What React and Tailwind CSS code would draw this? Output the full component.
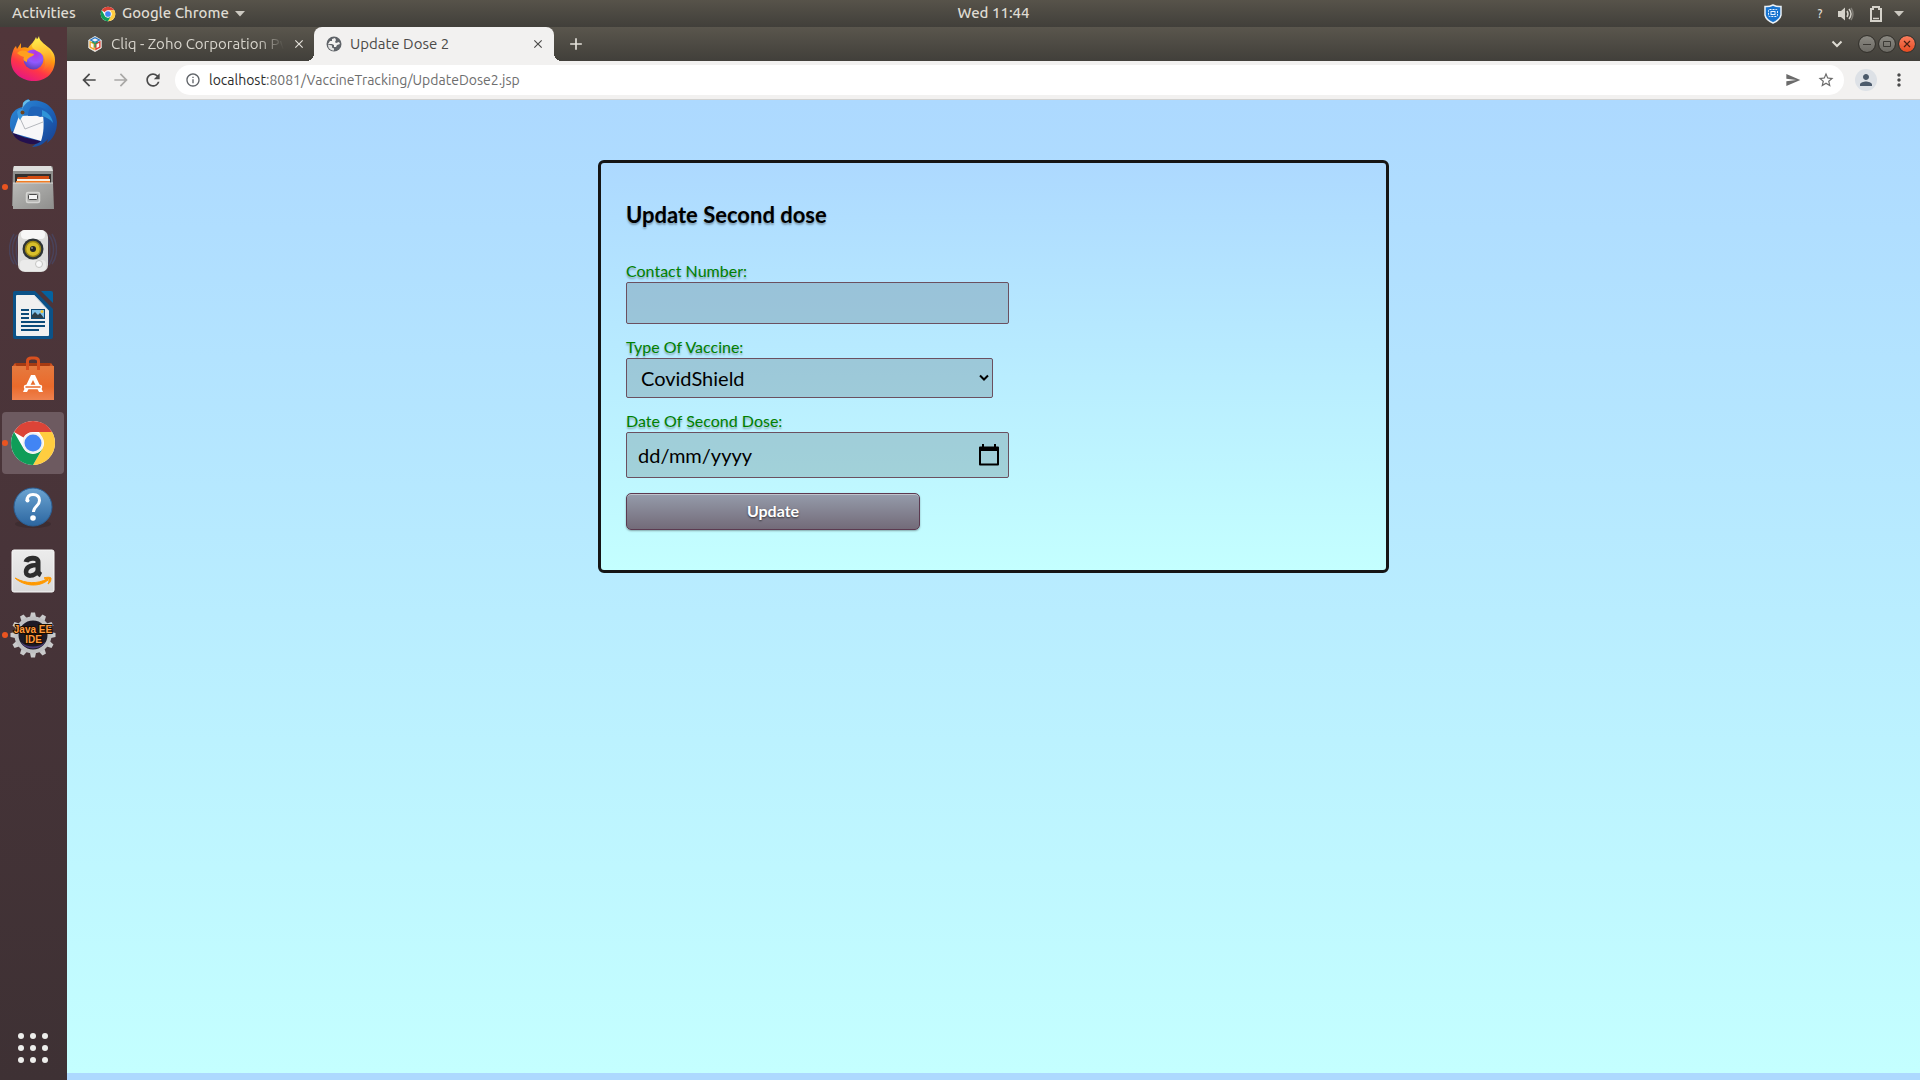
import { useState } from "react";
import {
  MdArrowBack,
  MdArrowForward,
  MdRefresh,
  MdInfoOutline,
  MdSend,
  MdStarBorder,
  MdPerson,
  MdMoreVert,
  MdClose,
  MdAdd,
} from "react-icons/md";

const UI = "font-['Ubuntu','Noto_Sans',sans-serif]";

function ChromeLogo({ className }) {
  return (
    <svg viewBox="0 0 48 48" className={className} aria-hidden="true">
      <circle cx="24" cy="24" r="22" fill="#fff" />
      <path d="M24 2a22 22 0 0 1 19.05 11H24a11 11 0 0 0-9.5 5.5L5 13A22 22 0 0 1 24 2z" fill="#db4437" />
      <path d="M43.05 13A22 22 0 0 1 24 46l9.5-16.5A11 11 0 0 0 33.500 18.500L30 13z" fill="#ffcd40" />
      <path d="M5 13l9.500 16.500A11 11 0 0 0 33.500 29.500L24 46A22 22 0 0 1 5 13z" fill="#0f9d58" />
      <circle cx="24" cy="24" r="10.500" fill="#f1f1f1" />
      <circle cx="24" cy="24" r="8.500" fill="#4285f4" />
    </svg>
  );
}

function Firefox() {
  return (
    <svg viewBox="0 0 48 48" className="size-12" aria-hidden="true">
      <defs>
        <linearGradient id="ffBody" x1="0.8" y1="0" x2="0.3" y2="1">
          <stop offset="0.1" stopColor="#fff44f" />
          <stop offset="0.4" stopColor="#ff980e" />
          <stop offset="0.7" stopColor="#ff3647" />
          <stop offset="1" stopColor="#e31587" />
        </linearGradient>
        <radialGradient id="ffGlobe" cx="0.6" cy="0.2" r="0.9">
          <stop offset="0" stopColor="#b833e1" />
          <stop offset="0.5" stopColor="#9059ff" />
          <stop offset="1" stopColor="#4f3aa6" />
        </radialGradient>
        <linearGradient id="ffTail" x1="0.5" y1="0" x2="0.6" y2="1">
          <stop offset="0" stopColor="#fff44f" />
          <stop offset="0.5" stopColor="#ffbd2f" />
          <stop offset="1" stopColor="#ff6a2a" stopOpacity="0.2" />
        </linearGradient>
      </defs>
      <path d="M4 16c1-3 2-4 3-5l1 3 4-6v5c2-1 5-1 7 0 3-4 6-6 8-11 1 4 4 7 8 9l-1-2c8 4 12 9 12 16 0 13-9 21-21 21S2 38 2 26c0-4 1-7 2-10z" fill="url(#ffBody)" />
      <circle cx="24.500" cy="24.500" r="10" fill="url(#ffGlobe)" />
      <path d="M30 1c0 6 8 8 11 15 4 9-1 18-8 20 4-4 4-11 1-16-3-4-12-5-11-10 1-4 6-5 7-9z" fill="url(#ffTail)" />
      <path d="M8 18c3-3 6-3 9-2 2 2 5 2 8 3 0 2-3 2-5 4-2 1-2 2-2 4-4-1-4-3-3-5-3-1-5-2-7-4z" fill="#ffa01e" />
    </svg>
  );
}

function Thunderbird() {
  return (
    <svg viewBox="0 0 48 48" className="size-12" aria-hidden="true">
      <defs>
        <linearGradient id="tbBody" x1="0" y1="0" x2="1" y2="1">
          <stop offset="0" stopColor="#2f8bd8" />
          <stop offset="0.5" stopColor="#1d67bd" />
          <stop offset="1" stopColor="#173c8c" />
        </linearGradient>
      </defs>
      <path d="M14 4C17 0 21-1 20 2c15-3 27 7 28 21 0 10-4 17-10 21l1-4c-4 5-10 8-16 8l5-4C13 44 0 37 1 24 1 14 7 9 14 8z" fill="url(#tbBody)" />
      <path d="M14 4c3-4 7-4 7-2-5 2-7 6-8 9z" fill="#66bde9" />
      <path d="M3 32c5 5 18 8 29 10-5 5-13 3-18 1C8 41 4 37 3 32z" fill="#23104f" />
      <path d="M10 17l24-1c1 9 1 17-2 26L4 34z" fill="#f7f7f8" />
      <path d="M10 17l6 13 18-7" fill="none" stroke="#b5b8bd" strokeWidth="1" />
      <path d="M8 13c3-5 8-3 7 2l-4 6-2-3z" fill="#3a96dc" />
      <circle cx="13.500" cy="13.500" r="2" fill="#6b4420" />
      <path d="M22 8c9-2 19 3 22 14-5-4-9-5-13-4-3-2-7-1-12-1 0-4 1-7 3-9z" fill="#1f63b8" />
      <path d="M33 11c6 2 10 7 11 13-3-4-7-6-11-7z" fill="#2f94d8" />
    </svg>
  );
}

function Files() {
  return (
    <svg viewBox="0 0 48 48" className="size-12" aria-hidden="true">
      <defs>
        <linearGradient id="flFront" x1="0" y1="0" x2="1" y2="1">
          <stop offset="0" stopColor="#b9b9b7" />
          <stop offset="1" stopColor="#8e8e8c" />
        </linearGradient>
      </defs>
      <path d="M4 5q0-2 2-2h36q2 0 2 2v38H3z" fill="#8f8f8d" />
      <path d="M5 3h37l2 5H4z" fill="#dededc" />
      <path d="M6 11h36v10H6z" fill="#33302f" />
      <path d="M9 14h9l1-1h21v8H8v-6z" fill="#d34c12" />
      <path d="M8 16h33v5H8z" fill="#f6f0e6" />
      <path d="M7 18h34v3H7z" fill="#f27d24" />
      <path d="M4 20h40l1 26H4z" fill="url(#flFront)" />
      <path d="M4 20h40" stroke="#d7d7d5" />
      <rect x="17.500" y="29.500" width="13" height="10" rx="1.500" fill="#b5b5b3" stroke="#d5d5d3" strokeWidth="1.500" />
      <rect x="19.500" y="31.500" width="9" height="5" rx="1" fill="#f4f4f4" stroke="#4a4a4a" />
    </svg>
  );
}

function Rhythmbox() {
  return (
    <svg viewBox="0 0 48 48" className="size-12" aria-hidden="true">
      <g fill="none" stroke="#46507a" strokeWidth="1.500" opacity="0.5">
        <path d="M8 8C2 16 2 28 8 38M5 7C-1 17-1 29 5 37M11 8C6 16 6 30 11 40" />
        <path d="M40 8c6 8 6 20 0 30M43 7c6 10 6 22 0 30M37 8c5 8 5 22 0 32" />
      </g>
      <rect x="9" y="3" width="30" height="42" rx="7" fill="#dcdcda" />
      <rect x="12" y="3" width="24" height="9" rx="4" fill="#f7f7f7" />
      <rect x="11" y="33" width="26" height="11" rx="4" fill="#ebebea" />
      <circle cx="24" cy="22" r="10.500" fill="#2e3436" />
      <circle cx="24" cy="22" r="7.500" fill="#d8bf2a" stroke="#9c8614" strokeWidth="1.500" />
      <circle cx="24" cy="22" r="3" fill="#242626" />
      <circle cx="23" cy="21" r="1" fill="#8a8a8a" />
      <circle cx="30" cy="37" r="3.500" fill="#f8f8f8" stroke="#c4c4c2" />
    </svg>
  );
}

function Writer() {
  return (
    <svg viewBox="0 0 48 48" className="size-12" aria-hidden="true">
      <path d="M6 0h20l18 18v28q0 2-2 2H6q-2 0-2-2V2q0-2 2-2z" fill="#0b5288" />
      <path d="M32 0h10q2 0 2 2v10z" fill="#04629f" />
      <path d="M9 4h16l15 16v24q0 1-1 1H8q-1 0-1-1V5q0-1 1-1z" fill="#f0f0f0" />
      <path d="M25 4l15 16" stroke="#c7d2d9" />
      <path d="M12 19h8M12 23h8M12 27h8M12 31h24M12 35h24M12 39h18" stroke="#0b4a78" strokeWidth="2" />
      <rect x="22.500" y="18.500" width="13" height="9" fill="#7fc1e9" stroke="#0b4a78" />
      <path d="M23 27v-3l3-3 3 3 2-2 4 5z" fill="#2c3e48" />
      <circle cx="33" cy="20.500" r="1.500" fill="#f4c52d" />
    </svg>
  );
}

function Software() {
  return (
    <svg viewBox="0 0 48 48" className="size-12" aria-hidden="true">
      <defs>
        <linearGradient id="swBag" x1="0" y1="0" x2="0" y2="1">
          <stop offset="0" stopColor="#e57a3f" />
          <stop offset="0.6" stopColor="#ea6a2b" />
          <stop offset="1" stopColor="#ee8250" />
        </linearGradient>
      </defs>
      <path d="M6 8h36v8H6z" fill="#a53a12" />
      <path d="M3 12l3-4 2 4zM45 12l-3-4-2 4z" fill="#cf5524" />
      <path d="M3 11h42v34H3z" fill="url(#swBag)" />
      <path d="M18.500 15V6q0-3 4-3h3q4 0 4 3v9" fill="none" stroke="#d8501f" strokeWidth="3" />
      <path d="M22 20h4l8 17h-4l-6-12-6 12h-4z" fill="#fff" />
      <rect x="15.500" y="30.500" width="17" height="3" rx="1.500" fill="#ea6a2b" stroke="#fff" strokeWidth="1.500" />
    </svg>
  );
}

function Help() {
  return (
    <svg viewBox="0 0 48 48" className="size-12" aria-hidden="true">
      <defs>
        <linearGradient id="hpDisc" x1="0" y1="0" x2="0" y2="1">
          <stop offset="0" stopColor="#6ba4d2" />
          <stop offset="1" stopColor="#2c66a0" />
        </linearGradient>
      </defs>
      <ellipse cx="24" cy="41" rx="18" ry="4" fill="#34252a" opacity="0.5" />
      <circle cx="24" cy="24" r="19" fill="url(#hpDisc)" stroke="#2a5f95" strokeWidth="1" />
      <path d="M18 18c0-5 3-6.500 6-6.500 4 0 6.500 2 6.500 6 0 5-6 6-6 11.500" fill="none" stroke="#fff" strokeWidth="3" />
      <circle cx="18.500" cy="17.500" r="2" fill="#fff" />
      <circle cx="24" cy="35" r="2.800" fill="#fff" />
    </svg>
  );
}

function Amazon() {
  return (
    <svg viewBox="0 0 48 48" className="size-12" aria-hidden="true">
      <defs>
        <linearGradient id="amBox" x1="0" y1="0" x2="0" y2="1">
          <stop offset="0" stopColor="#ececec" />
          <stop offset="1" stopColor="#dadada" />
        </linearGradient>
      </defs>
      <rect x="3" y="3" width="42" height="42" rx="2" fill="url(#amBox)" stroke="#f8f8f8" />
      <path d="M17 15c1-4 12-6 12 0v9c0 2 1 3 3 4" fill="none" stroke="#2d2d2d" strokeWidth="5" />
      <path d="M29 18c-9 0-12 3-12 7 0 5 8 5 12-1" fill="none" stroke="#2d2d2d" strokeWidth="4.500" />
      <path d="M6 31c10 9 25 9 33 2l-1-1c-9 5-21 5-32-1z" fill="#ff9900" stroke="#ff9900" />
      <path d="M35 31c3-1 6-1 7 0 0 3-1 5-3 6 1-2 1-4 1-5z" fill="#ff9900" stroke="#ff9900" />
    </svg>
  );
}

function JavaEE() {
  const teeth = [0, 30, 60, 90, 120, 150, 180, 210, 240, 270, 300, 330];
  return (
    <svg viewBox="0 0 48 48" className="size-12" aria-hidden="true">
      {teeth.map((a) => (
        <path key={a} d="M22 1.500h4l1.500 7h-7z" fill="#c9cacb" transform={`rotate(${a} 24 24)`} />
      ))}
      <circle cx="24" cy="24" r="16.500" fill="#1d1a26" stroke="#bfc0c2" strokeWidth="4" />
      <path d="M12 31c6 6 18 6 24 0-3 8-20 9-24 0z" fill="#4a3d78" />
      <g fontFamily="Liberation Sans" fontWeight="bold" fontSize="10" textAnchor="middle" fill="#ff9a3c" stroke="#1a0d00" strokeWidth="2" paintOrder="stroke">
        <text x="24" y="22">Java EE</text>
        <text x="24.500" y="32">IDE</text>
      </g>
    </svg>
  );
}

function Globe() {
  return (
    <svg viewBox="0 0 16 16" className="size-4 shrink-0" aria-hidden="true">
      <circle cx="8" cy="8" r="7.500" fill="#5f6368" />
      <path d="M9 2l-3 1v2H4L2 8h4l2 1v2h2l1-2 3-1-1-2-3 1-1-1 1-2z" fill="#f2f1f0" />
      <path d="M2 8.500l4 1v2l2 1v2C4 14.500 2 12 2 8.500z" fill="#f2f1f0" opacity="0.9" />
    </svg>
  );
}

const DOCK = [
  { name: "Firefox", icon: <Firefox /> },
  { name: "Thunderbird", icon: <Thunderbird /> },
  { name: "Files", icon: <Files />, running: true },
  { name: "Rhythmbox", icon: <Rhythmbox /> },
  { name: "LibreOffice Writer", icon: <Writer /> },
  { name: "Ubuntu Software", icon: <Software /> },
  { name: "Google Chrome", icon: <ChromeLogo className="size-12" />, running: true, active: true },
  { name: "Help", icon: <Help /> },
  { name: "Amazon", icon: <Amazon /> },
  { name: "Java EE IDE", icon: <JavaEE />, running: true },
];

function TopBar() {
  return (
    <header className={`${UI} grid h-[27px] shrink-0 grid-cols-[1fr_auto_1fr] items-center bg-linear-to-b from-[#57534a] to-[#413f3a] pl-[67px] text-[15px] font-medium text-[#dfdbd2]`}>
      <div className="-ml-[67px] flex items-center pl-3">
        <button aria-label="Activities" className="w-[88px] text-left">Activities</button>
        <button className="flex items-center">
          <ChromeLogo className="size-4" />
          <span className="ml-[6px] mr-[6px]">Google Chrome</span>
          <svg viewBox="0 0 10 6" className="h-[6px] w-[10px]" aria-hidden="true"><path d="M0 0h10L5 5.500z" fill="#ccc9c1" /></svg>
        </button>
      </div>
      <button>Wed 11:44</button>
      <div className="flex items-center justify-end pr-4">
        <svg viewBox="0 0 18 20" className="mr-8 h-5 w-[18px]" aria-hidden="true">
          <path d="M1 2.500Q5 3 9 1q4 2 8 1.500V11q-1 5-8 8-7-3-8-8z" fill="#1673cf" stroke="#e9f1f8" strokeWidth="1.500" />
          <rect x="4.500" y="5.500" width="9" height="7" rx="1" fill="none" stroke="#e8f3ff" strokeDasharray="2 1" />
          <rect x="7" y="7.500" width="4" height="3" fill="none" stroke="#e8f3ff" />
        </svg>
        <span className="mr-3 w-3 pt-px text-center text-xs">?</span>
        <svg viewBox="0 0 16 14" className="mr-4 h-[14px] w-4" aria-hidden="true">
          <path d="M0 4h3l4-3.500v13L3 10H0z" fill="#d5d2ca" />
          <path d="M9 4q2 3 0 6M11 2q4 5 0 10" fill="none" stroke="#d5d2ca" strokeWidth="1.500" />
          <path d="M13 1q4 6 0 12" fill="none" stroke="#7f7c75" strokeWidth="1.500" />
        </svg>
        <svg viewBox="0 0 12 16" className="mr-3 h-4 w-3" aria-hidden="true">
          <path d="M1 3h2V1h6v2h2v12H1z" fill="none" stroke="#d5d2ca" strokeWidth="2" />
          <path d="M3 12.500h6" stroke="#d5d2ca" strokeWidth="1.500" />
        </svg>
        <svg viewBox="0 0 10 6" className="h-[6px] w-[10px]" aria-hidden="true"><path d="M0 0h10L5 5.500z" fill="#ccc9c1" /></svg>
      </div>
    </header>
  );
}

function Dock() {
  return (
    <nav aria-label="Dock" className="flex w-[67px] shrink-0 flex-col items-center gap-[2px] bg-linear-to-b from-[#51363a] via-[#483439] to-[#3e3134] pt-px pr-px">
      {DOCK.map((app) => (
        <button
          key={app.name}
          aria-label={app.name}
          className={`relative flex size-[62px] items-center justify-center rounded ${app.active ? "bg-[#6d5a60]" : ""}`}
        >
          {app.icon}
          {app.running && <span className="absolute top-[28px] left-0 size-[6px] rounded-full bg-[#e95420]" />}
        </button>
      ))}
      <button aria-label="Show Applications" className="mt-auto mb-[17px] grid grid-cols-3 gap-[6px]">
        {Array.from({ length: 9 }, (_, i) => (
          <span key={i} className="size-[6px] rounded-full bg-[#eeeeec]" />
        ))}
      </button>
    </nav>
  );
}

function TabStrip() {
  return (
    <div className="flex h-[34px] shrink-0 items-center bg-linear-to-b from-[#5a564d] to-[#413f3a] text-sm">
      <div className="flex w-[247px] items-center pl-5">
        <svg viewBox="0 0 16 18" className="h-4 w-4 shrink-0" aria-hidden="true">
          <path d="M8 .5l7 4v9l-7 4-7-4v-9z" fill="#f7f7f5" stroke="#e8e8e4" />
          <path d="M3 4.500l5-2.500 5 2.500-5 2.500z" fill="none" stroke="#2a78c8" strokeWidth="1.500" />
          <path d="M2.500 6.500L7 9v6l-4.500-2.500z" fill="none" stroke="#f0a42c" strokeWidth="1.500" />
          <path d="M13.500 6.500L9 9v6l4.500-2.500z" fill="none" stroke="#e0392f" strokeWidth="1.500" />
          <path d="M4.500 6.500L8 8.500l3.500-2M8 8.500V13" fill="none" stroke="#1f9a55" strokeWidth="1.500" />
        </svg>
        <button className="ml-2 w-[173px] overflow-hidden text-left text-[15px] whitespace-nowrap text-[#d8d5cd] mask-r-from-85% mask-r-to-100%">
          Cliq - Zoho Corporation Pvt
        </button>
        <button aria-label="Close Cliq tab" className="ml-2 text-[#e4e1da]"><MdClose className="size-[14px]" /></button>
      </div>
      <div className="relative flex h-full w-[240px] items-center rounded-t-lg bg-[#f2f1f0] pl-3 text-[#4b4a48]">
        <span className="absolute bottom-0 -left-2 size-2 bg-[radial-gradient(circle_at_0_0,transparent_8px,#f2f1f0_8px)]" />
        <span className="absolute -right-2 bottom-0 size-2 bg-[radial-gradient(circle_at_100%_0,transparent_8px,#f2f1f0_8px)]" />
        <Globe />
        <button className="ml-2 flex-1 text-left text-[15px]">Update Dose 2</button>
        <button aria-label="Close Update Dose 2 tab" className="mr-[9px]"><MdClose className="size-[14px]" /></button>
      </div>
      <button aria-label="New tab" className="ml-3 text-[#e4e1da]"><MdAdd className="size-5" /></button>
      <div className="ml-auto flex items-center gap-1 pr-[5px]">
        <button aria-label="Search tabs" className="mr-3">
          <svg viewBox="0 0 12 8" className="h-2 w-3"><path d="M1.500 1.500L6 6l4.500-4.500" fill="none" stroke="#dedbd3" strokeWidth="2" /></svg>
        </button>
        <button aria-label="Minimize" className="flex size-4 items-center justify-center rounded-full bg-linear-to-b from-[#8b8982] to-[#6c6a64] outline outline-[#35332e]">
          <svg viewBox="0 0 10 10" className="size-[10px]"><path d="M1 5.500h8" stroke="#3b3934" /></svg>
        </button>
        <button aria-label="Maximize" className="flex size-4 items-center justify-center rounded-full bg-linear-to-b from-[#8b8982] to-[#6c6a64] outline outline-[#35332e]">
          <svg viewBox="0 0 10 10" className="size-[10px]"><path d="M1.500 2.500h7v5h-7z" fill="none" stroke="#3b3934" /></svg>
        </button>
        <button aria-label="Close window" className="flex size-4 items-center justify-center rounded-full bg-linear-to-b from-[#fa7d5c] to-[#e74a1f] outline outline-[#35332e]">
          <svg viewBox="0 0 10 10" className="size-[10px]"><path d="M2 2l6 6M8 2L2 8" stroke="#4a2013" strokeWidth="1.200" /></svg>
        </button>
      </div>
    </div>
  );
}

function Toolbar() {
  return (
    <div className="flex h-[39px] shrink-0 items-center border-b border-[#d3d2d0] bg-[#f2f1f0] pl-3 text-[#4a4a4a]">
      <button aria-label="Back" className="mr-3"><MdArrowBack className="size-5" /></button>
      <button aria-label="Forward" className="mr-3 text-[#a9a8a6]"><MdArrowForward className="size-5" /></button>
      <button aria-label="Reload" className="mr-3"><MdRefresh className="size-5" /></button>
      <div className="relative flex h-[30px] flex-1 items-center rounded-full bg-white pr-[9px] pl-[10px]">
        <MdInfoOutline className="size-4 text-[#5f6368]" />
        <button aria-label="Edit address" className="ml-2 flex-1 text-left text-sm text-[#6e6e6e]">
          <span className="text-[#2b2b2b]">localhost</span>:8081/VaccineTracking/UpdateDose2.jsp
        </button>
        <button aria-label="Share" className="mr-4 text-[#6b6b6b]"><MdSend className="size-4" /></button>
        <button aria-label="Bookmark" className="text-[#6b6b6b]"><MdStarBorder className="size-[18px]" /></button>
      </div>
      <button aria-label="Profile" className="ml-[11px] flex size-[22px] items-center justify-center rounded-full bg-[#dde1e6] text-[#4b5a6b]">
        <MdPerson className="size-[18px]" />
      </button>
      <button aria-label="Menu" className="mr-[11px] ml-3"><MdMoreVert className="size-5" /></button>
    </div>
  );
}

const LABEL = "block h-[22px] text-base leading-[22px] text-[#008000] text-shadow-[0_2px_2px_rgb(0_0_0/0.3)]";
const FIELD = "rounded-xs border border-[#6b5060] bg-black/15 text-xl text-black outline-none";

function UpdateForm() {
  const [phone, setPhone] = useState("");
  const [vaccine, setVaccine] = useState("CovidShield");
  const [date, setDate] = useState("");
  return (
    <form
      onSubmit={(e) => e.preventDefault()}
      className="mx-auto w-full max-w-[791px] rounded-md border-3 border-[#151515] bg-linear-to-b from-[#add9ff] to-[#c4ffff] px-[25px] pt-9 pb-10 font-['Lato',sans-serif]"
    >
      <h2 className="mb-[29px] text-[22px] leading-8 font-bold text-black text-shadow-[0_2px_2px_rgb(0_0_0/0.3)]">Update Second dose</h2>
      <label htmlFor="contact" className={LABEL}>Contact Number:</label>
      <input id="contact" type="text" value={phone} onChange={(e) => setPhone(e.target.value)} className={`${FIELD} mb-3 block h-[42px] w-[383px] px-[11px]`} />
      <label htmlFor="vaccine" className={LABEL}>Type Of Vaccine:</label>
      <div className="relative mb-3 w-[367px]">
        <select id="vaccine" value={vaccine} onChange={(e) => setVaccine(e.target.value)} className={`${FIELD} block h-10 w-full appearance-none px-[14px]`}>
          <option>CovidShield</option>
          <option>Covaxin</option>
        </select>
        <svg viewBox="0 0 10 8" className="pointer-events-none absolute top-4 right-1 h-2 w-[10px]" aria-hidden="true">
          <path d="M1 1.500l4 4 4-4" fill="none" stroke="#000" strokeWidth="2" />
        </svg>
      </div>
      <label htmlFor="date" className={LABEL}>Date Of Second Dose:</label>
      <div className="relative mb-[15px] w-[383px]">
        <input id="date" type="text" placeholder="dd/mm/yyyy" value={date} onChange={(e) => setDate(e.target.value)} className={`${FIELD} block h-[46px] w-full px-[11px] placeholder:text-black`} />
        <button type="button" aria-label="Open calendar" className="absolute top-3 right-[10px]">
          <svg viewBox="0 0 20 22" className="h-[22px] w-5">
            <path d="M1 3.500h18v17H1z" fill="none" stroke="#000" strokeWidth="2" strokeLinejoin="round" />
            <path d="M1 3h18v4H1zM3 0h2v3H3zM15 0h2v3h-2z" fill="#000" />
          </svg>
        </button>
      </div>
      <button type="submit" className="block h-[37px] w-[294px] rounded-[5px] border border-[#5b3a50] bg-linear-to-b from-[#959cab] to-[#736b79] pb-[2px] text-base font-bold text-white shadow-[inset_0_1px_0_#ffffff66,0_1px_2px_#00000055] text-shadow-[0_1px_2px_rgb(0_0_0/0.6)]">
        Update
      </button>
    </form>
  );
}

export default function App() {
  return (
    <div className={`${UI} flex h-screen flex-col overflow-hidden`}>
      <TopBar />
      <div className="flex min-h-0 flex-1">
        <Dock />
        <div className="flex min-w-0 flex-1 flex-col">
          <TabStrip />
          <Toolbar />
          <main className="min-h-0 flex-1 bg-[#add9ff] pb-[7px]">
            <div className="h-full bg-linear-to-b from-[#add9ff] to-[#c4ffff] px-4 pt-[60px]">
              <UpdateForm />
            </div>
          </main>
        </div>
      </div>
    </div>
  );
}
